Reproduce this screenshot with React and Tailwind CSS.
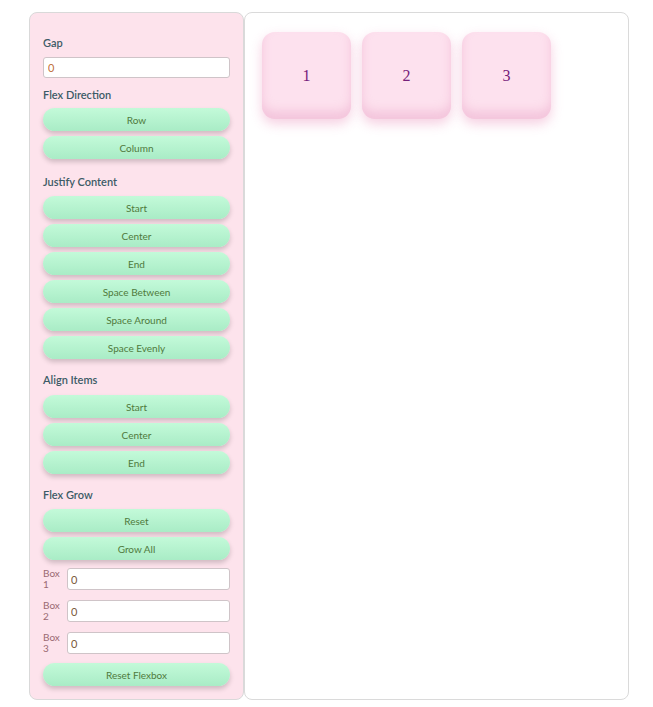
import React from "react";

const Btn = ({ children }) => (
  <button className="block w-full h-[23px] rounded-full bg-gradient-to-b from-[#c3fad9] to-[#a9ecc6] shadow-[0_3px_5px_rgba(0,0,0,0.18)] text-[10px] text-[#4f7a3c] leading-none">
    {children}
  </button>
);

const Label = ({ children, className = "" }) => (
  <div className={"text-[11px] font-semibold text-[#3c5b66] leading-[14px] " + className}>{children}</div>
);

const Box = ({ n }) => (
  <div className="w-[89px] h-[87px] rounded-[13px] bg-[#fde1ee] shadow-[inset_0_-8px_10px_rgba(230,150,190,0.35),0_5px_12px_rgba(236,150,190,0.45)] flex items-center justify-center text-[16px] text-[#76207a]" style={{ fontFamily: '"Liberation Serif", serif' }}>
    {n}
  </div>
);

export default function App() {
  return (
    <div className="w-[653px] h-[707px] bg-white flex items-start pt-[12px] pl-[29px]" style={{ fontFamily: 'Lato, "Noto Sans", sans-serif' }}>
      <div className="w-[215px] h-[688px] shrink-0 rounded-[8px] border border-[#d9d9d9] bg-[#fde3ec] px-[13px] pt-[23px]">
        <Label>Gap</Label>
        <input readOnly value="0" className="block mt-[7px] h-[21px] w-full rounded-[3px] border border-[#cfc4c8] bg-white px-[4px] text-[11px] text-[#c0703a]" />
        <Label className="mt-[10px]">Flex Direction</Label>
        <div className="mt-[6px] flex flex-col gap-[5px]">
          <Btn>Row</Btn>
          <Btn>Column</Btn>
        </div>
        <Label className="mt-[16px]">Justify Content</Label>
        <div className="mt-[7px] flex flex-col gap-[5px]">
          <Btn>Start</Btn>
          <Btn>Center</Btn>
          <Btn>End</Btn>
          <Btn>Space Between</Btn>
          <Btn>Space Around</Btn>
          <Btn>Space Evenly</Btn>
        </div>
        <Label className="mt-[14px]">Align Items</Label>
        <div className="mt-[8px] flex flex-col gap-[5px]">
          <Btn>Start</Btn>
          <Btn>Center</Btn>
          <Btn>End</Btn>
        </div>
        <Label className="mt-[14px]">Flex Grow</Label>
        <div className="mt-[7px] flex flex-col gap-[5px]">
          <Btn>Reset</Btn>
          <Btn>Grow All</Btn>
        </div>
        <div className="mt-[8px] flex flex-col gap-[10px]">
          {[1, 2, 3].map((i) => (
            <div key={i} className="flex items-start gap-[8px]">
              <div className="w-[16px] h-[22px] text-[10px] leading-[11px] text-[#9a6a72]">Box<br />{i}</div>
              <input readOnly value="0" className="block h-[22px] flex-1 min-w-0 rounded-[3px] border border-[#cfc4c8] bg-white px-[3px] text-[11px] text-[#7a5a3a]" />
            </div>
          ))}
        </div>
        <div className="mt-[9px]">
          <Btn>Reset Flexbox</Btn>
        </div>
      </div>
      <div className="w-[385px] h-[688px] shrink-0 rounded-[8px] border border-[#dadada] bg-white pl-[17px] pt-[19px]">
        <div className="flex gap-[11px]">
          <Box n={1} />
          <Box n={2} />
          <Box n={3} />
        </div>
      </div>
    </div>
  );
}
